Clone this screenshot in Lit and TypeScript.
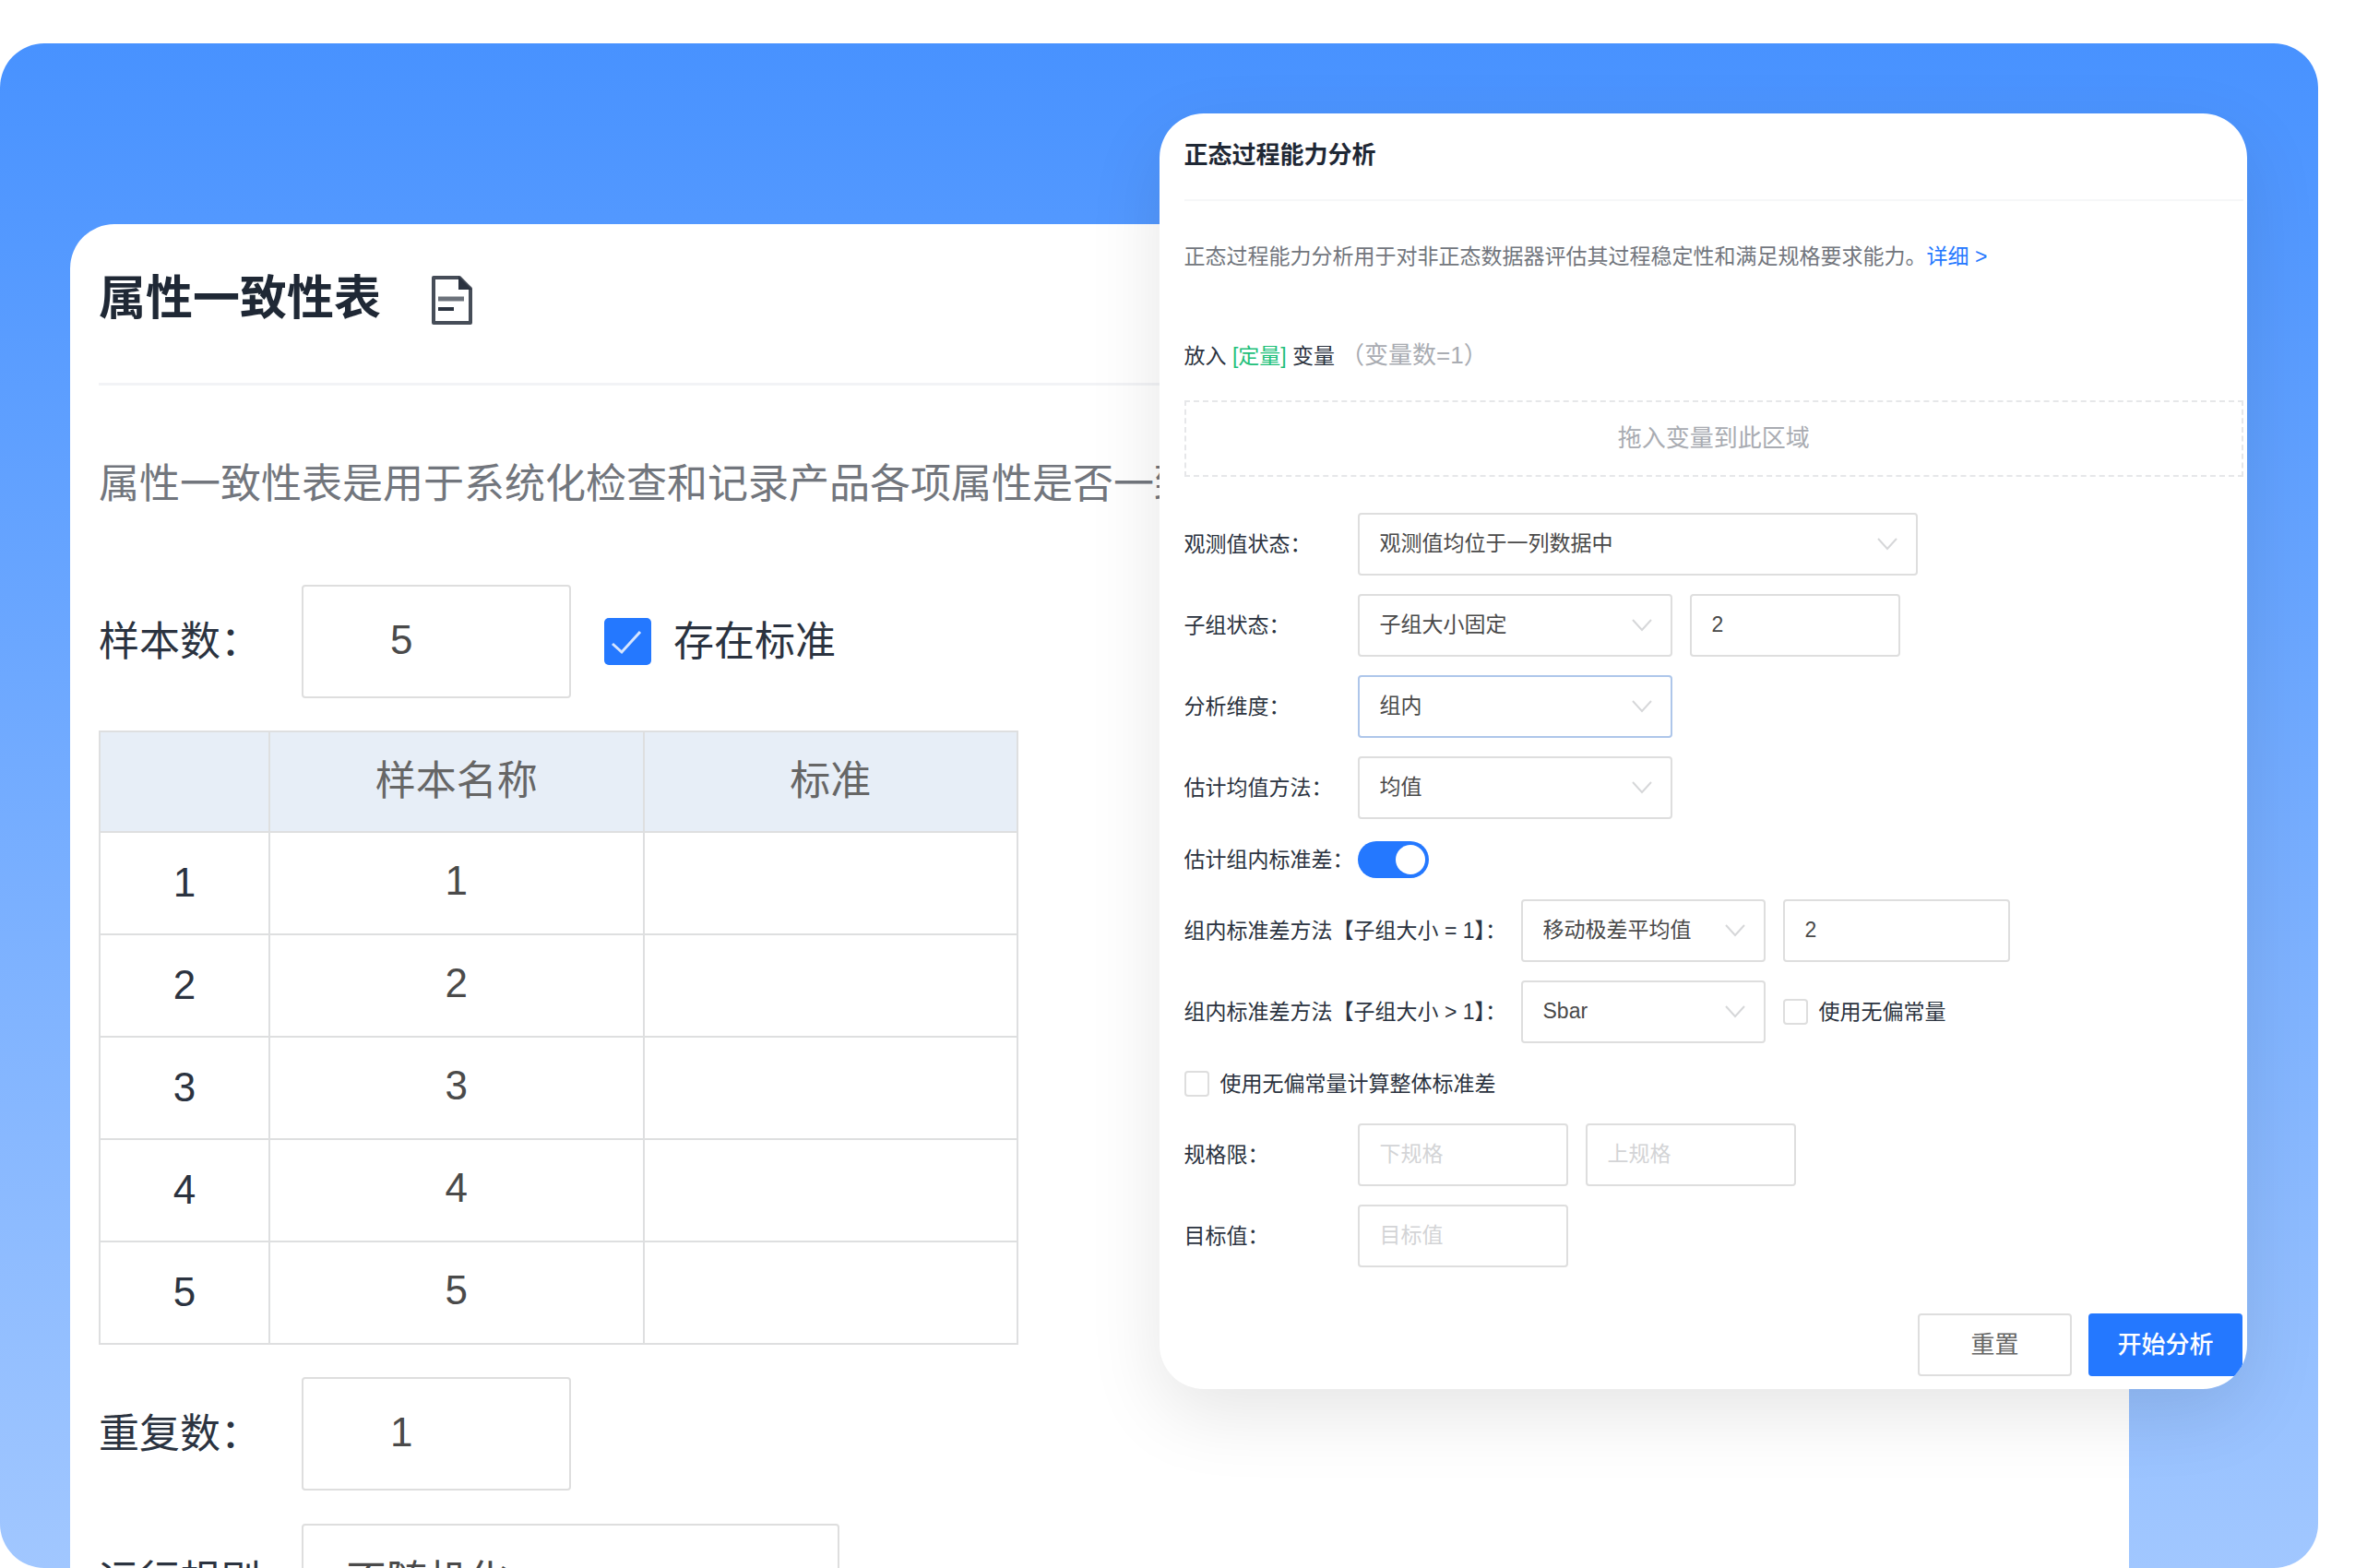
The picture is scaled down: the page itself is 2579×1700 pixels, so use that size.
import { LitElement, html, css, nothing } from "lit";
import { customElement, property } from "lit/decorators.js";

const base = css`
  *, *::before, *::after { box-sizing: border-box; }
  h1, h2, p { margin: 0; font-weight: inherit; }
  input, select, button { font: inherit; color: inherit; margin: 0; }
  input, select { appearance: none; outline: none; background: #fff; border: 2px solid #dedede; border-radius: 4px; }
  input[type="checkbox"] { flex: none; display: block; padding: 0; }
`;

@customElement("attribute-card")
class AttributeCard extends LitElement {
  static styles = [base, css`
    :host { display: block; background: #fff; border-radius: 48px 48px 0 0; padding: 0 31px; color: #2b3340; font-size: 44px; line-height: 64px; }
    .head { display: flex; align-items: center; gap: 54px; height: 175px; padding-bottom: 10px; border-bottom: 3px solid #f2f3f6; }
    .head h1 { font-size: 51px; font-weight: 700; line-height: 72px; color: #1f2835; }
    .doc { width: 46px; height: 54px; margin-top: 4px; }
    .desc { margin-top: 75px; color: #72767d; white-space: nowrap; overflow: hidden; }
    .row { display: flex; align-items: center; }
    .row label.name { width: 220px; white-space: nowrap; }
    .first { margin-top: 77px; }
    .num { width: 292px; height: 123px; padding: 0 94px 4px; color: #4a4a4a; }
    .check { display: flex; align-items: center; gap: 24px; margin-left: 36px; }
    .check input { width: 51px; height: 51px; border: none; border-radius: 5px; background: #2478ff; }
    .box { display: grid; }
    .box > * { grid-area: 1 / 1; }
    .box svg { width: 51px; height: 51px; pointer-events: none; }
    table { width: 997px; margin-top: 35px; border-collapse: collapse; table-layout: fixed; text-align: center; }
    th, td { height: 111px; padding: 0 0 6px; border: 2px solid #dedfe0; font-weight: 400; color: #4a4a4a; }
    thead th { height: 109px; background: #e7eef7; color: #666; padding-bottom: 2px; }
    tbody th { color: #2b3340; padding-bottom: 2px; }
    .idx { width: 184px; }
    .second { margin-top: 35px; }
    .third { margin-top: 36px; }
    select { width: 583px; height: 123px; padding: 0 46px; color: #4a4a4a; }
  `];

  render() {
    return html`
      <header class="head">
        <h1>属性一致性表</h1>
        <svg class="doc" viewBox="0 0 46 54" fill="none" stroke="#464d58" stroke-width="4" aria-hidden="true">
          <path d="M3 2H31L43 14V51H3Z" stroke-linejoin="round" />
          <path d="M31 3V14H42Z" fill="#2b3340" stroke="#2b3340" stroke-width="2" />
          <path d="M8 25H36" stroke="#6c727b" stroke-width="5" />
          <path d="M8 36H25" stroke="#2b3340" />
        </svg>
      </header>
      <p class="desc">属性一致性表是用于系统化检查和记录产品各项属性是否一致</p>
      <div class="row first">
        <label class="name" for="samples">样本数：</label>
        <input class="num" id="samples" type="text" value="5" />
        <label class="check">
          <span class="box">
            <input type="checkbox" checked />
            <svg viewBox="0 0 51 51" fill="none" stroke="#d6e5ff" stroke-width="3"><path d="M9 28L19 37L39 15" /></svg>
          </span>
          存在标准
        </label>
      </div>
      <table>
        <thead><tr><th class="idx"></th><th>样本名称</th><th>标准</th></tr></thead>
        <tbody>
          ${[1, 2, 3, 4, 5].map((n) => html`<tr><th>${n}</th><td>${n}</td><td></td></tr>`)}
        </tbody>
      </table>
      <div class="row second">
        <label class="name" for="repeats">重复数：</label>
        <input class="num" id="repeats" type="text" value="1" />
      </div>
      <div class="row third">
        <label class="name" for="rule">运行规则：</label>
        <select id="rule"><option>不随机化</option></select>
      </div>
    `;
  }
}

@customElement("pick-list")
class PickList extends LitElement {
  @property() label = "";
  @property() value = "";
  @property({ type: Boolean }) active = false;

  static styles = [base, css`
    :host { display: grid; align-items: center; }
    select { grid-area: 1 / 1; width: 100%; height: 68px; padding: 0 22px 2px; color: #4a4a4a; font-size: 23px; }
    select.active { border-color: #aec6ea; }
    svg { grid-area: 1 / 1; justify-self: end; width: 22px; height: 14px; margin-right: 22px; pointer-events: none; }
  `];

  render() {
    return html`
      <select aria-label=${this.label} class=${this.active ? "active" : ""}><option>${this.value}</option></select>
      <svg viewBox="0 0 22 14" fill="none" stroke="#d6d7d9" stroke-width="2"><path d="M1 1L11 12L21 1" /></svg>
    `;
  }
}

@customElement("analysis-panel")
class AnalysisPanel extends LitElement {
  static styles = [base, css`
    :host { display: flex; flex-direction: column; background: #fff; border-radius: 48px; overflow: hidden; padding: 0 4px 14px 27px; color: #2b3340; font-size: 23px; line-height: 32px; box-shadow: 0 27px 80px rgba(0, 0, 0, 0.1); }
    .title { height: 95px; padding-top: 27px; border-bottom: 2px solid #f6f7f8; font-size: 26px; font-weight: 700; line-height: 36px; color: #1f2835; }
    .desc { margin-top: 44px; color: #72767d; white-space: nowrap; }
    a { color: #2478ff; text-decoration: none; }
    .vars { display: flex; align-items: center; margin-top: 74px; height: 36px; white-space: pre; }
    .kind { color: #1fc07a; }
    .count { font-size: 26px; color: #a9acb2; margin-left: 6px; padding-bottom: 2px; }
    .drop { display: flex; align-items: center; justify-content: center; height: 83px; margin-top: 30px; padding-bottom: 2px; border: 2px dashed #e6e7e9; font-size: 26px; color: #a9acb2; }
    .form { display: flex; flex-direction: column; gap: 20px; margin-top: 39px; }
    .row { display: flex; align-items: center; gap: 19px; min-height: 68px; }
    .low { min-height: 47px; }
    .name { width: 169px; white-space: nowrap; }
    .wide { width: 346px; }
    .w1 { width: 607px; }
    .w2 { width: 341px; }
    .w3 { width: 265px; }
    .text { width: 228px; height: 68px; padding: 0 22px 2px; color: #4a4a4a; }
    .text.long { width: 246px; }
    .text::placeholder { color: #d3d4d6; opacity: 1; }
    .check { display: flex; align-items: center; gap: 12px; white-space: nowrap; }
    .check input { width: 27px; height: 28px; }
    input.switch[type="checkbox"] { display: flex; align-items: center; width: 77px; height: 40px; padding: 0 4px; border: none; border-radius: 20px; background: #2478ff; }
    .switch::before { content: ""; width: 32px; height: 32px; margin-left: auto; border-radius: 50%; background: #fff; }
    .actions { display: flex; justify-content: flex-end; gap: 18px; margin-top: 50px; }
    button { width: 167px; height: 68px; padding: 0; border: 2px solid #dedede; border-radius: 4px; background: #fff; color: #666; font-size: 26px; }
    button.primary { border-color: #2478ff; background: #2478ff; color: #fff; font-weight: 500; margin-right: 1px; }
  `];

  private picker(name: string, cls: string, value: string, active = false) {
    return html`<pick-list class=${cls} .label=${name} .value=${value} ?active=${active}></pick-list>`;
  }

  private row(name: string, cls: string, value: string, extra: unknown = nothing, active = false, nameCls = "") {
    return html`<div class="row"><span class="name ${nameCls}">${name}</span>${this.picker(name, cls, value, active)}${extra}</div>`;
  }

  render() {
    return html`
      <h2 class="title">正态过程能力分析</h2>
      <p class="desc">正态过程能力分析用于对非正态数据器评估其过程稳定性和满足规格要求能力。<a href="#">详细 &gt;</a></p>
      <div class="vars"><span>放入 </span><span class="kind">[定量]</span><span> 变量</span><span class="count">（变量数=1）</span></div>
      <div class="drop">拖入变量到此区域</div>
      <div class="form">
        ${this.row("观测值状态：", "w1", "观测值均位于一列数据中")}
        ${this.row("子组状态：", "w2", "子组大小固定", html`<input class="text" type="text" aria-label="子组状态" value="2" />`)}
        ${this.row("分析维度：", "w2", "组内", nothing, true)}
        ${this.row("估计均值方法：", "w2", "均值")}
        <div class="row low">
          <label class="name" for="within">估计组内标准差：</label>
          <input class="switch" id="within" type="checkbox" role="switch" checked />
        </div>
        ${this.row("组内标准差方法【子组大小 = 1】：", "w3", "移动极差平均值",
          html`<input class="text long" type="text" aria-label="移动极差长度" value="2" />`, false, "wide")}
        ${this.row("组内标准差方法【子组大小 > 1】：", "w3", "Sbar",
          html`<label class="check"><input type="checkbox" />使用无偏常量</label>`, false, "wide")}
        <div class="row low"><label class="check"><input type="checkbox" />使用无偏常量计算整体标准差</label></div>
        <div class="row">
          <label class="name" for="lower">规格限：</label>
          <input class="text" id="lower" type="text" placeholder="下规格" />
          <input class="text" type="text" aria-label="上规格" placeholder="上规格" />
        </div>
        <div class="row">
          <label class="name" for="target">目标值：</label>
          <input class="text" id="target" type="text" placeholder="目标值" />
        </div>
      </div>
      <div class="actions">
        <button type="button">重置</button>
        <button type="button" class="primary">开始分析</button>
      </div>
    `;
  }
}

@customElement("app-root")
class AppRoot extends LitElement {
  static styles = [base, css`
    :host { display: block; height: 100vh; overflow: hidden; padding: 47px 66px 0 0; box-sizing: border-box; background: #fff; font-family: "Liberation Sans", "Noto Sans CJK SC", sans-serif; }
    .stage { position: relative; height: 100%; border-radius: 48px; padding: 196px 205px 0 76px; background: linear-gradient(180deg, #4892ff, #a1c7ff); }
    .back { height: 100%; overflow: hidden; }
    .front { position: absolute; top: 76px; left: 50%; right: 77px; }
  `];

  render() {
    return html`
      <main class="stage">
        <attribute-card class="back"></attribute-card>
        <analysis-panel class="front"></analysis-panel>
      </main>
    `;
  }
}
